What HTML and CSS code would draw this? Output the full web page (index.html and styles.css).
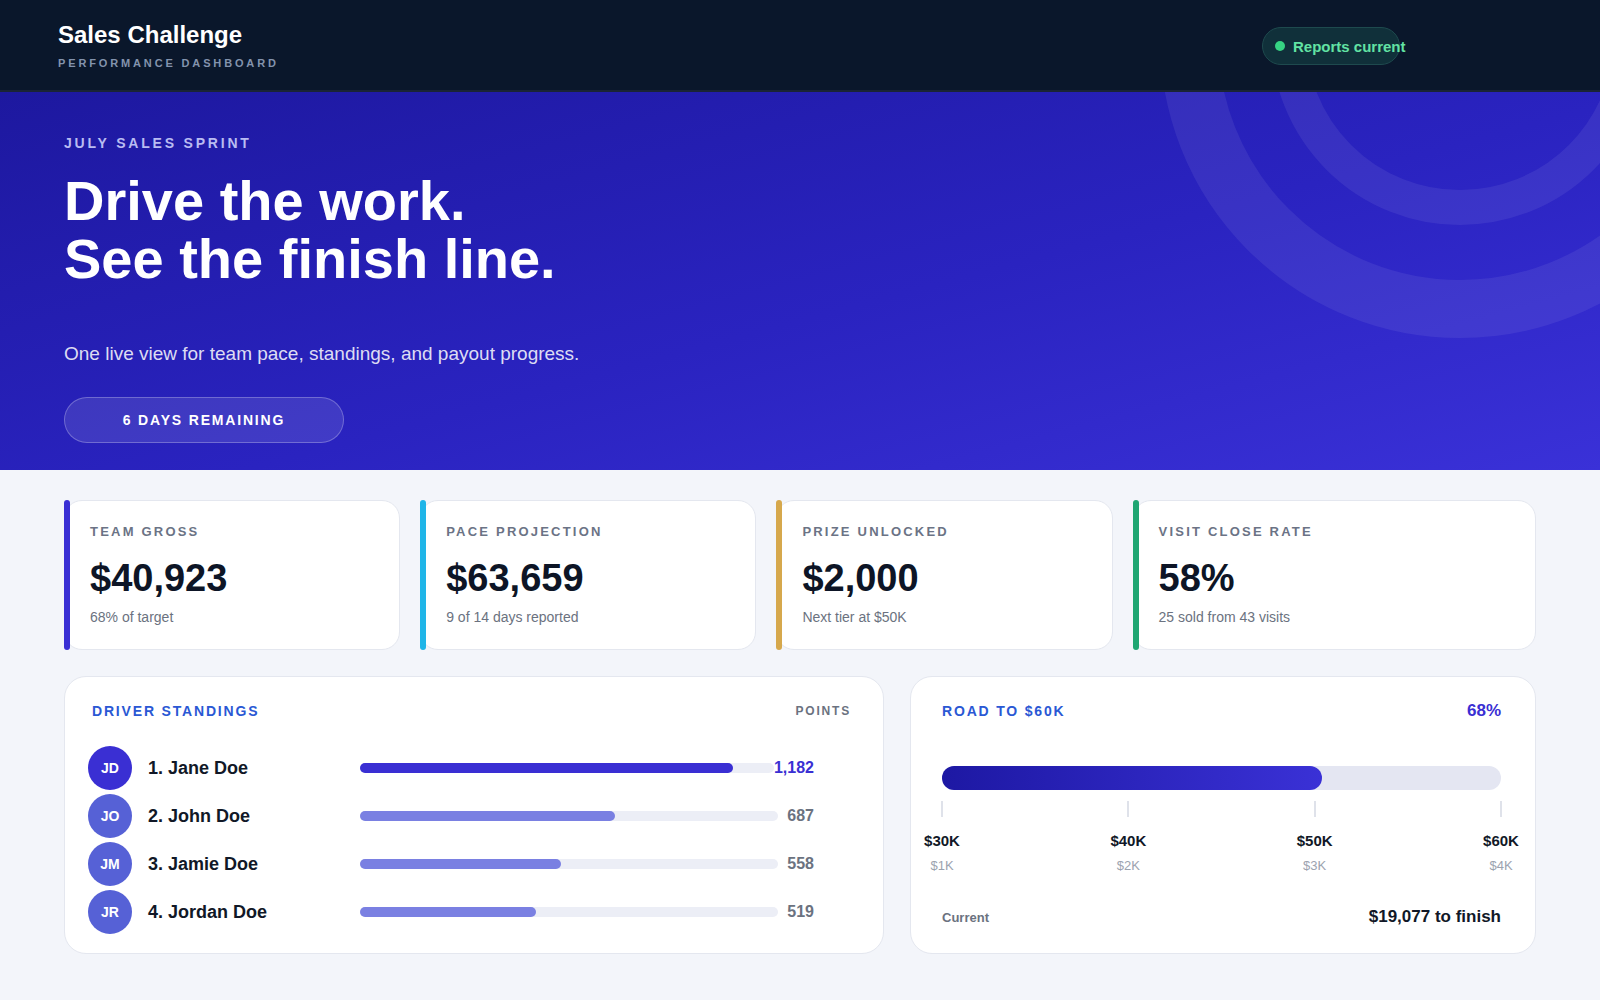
FILE: index.html
```html
<!DOCTYPE html>
<html lang="en">
<head>
<meta charset="utf-8">
<title>Sales Challenge · Performance Dashboard</title>
<link rel="stylesheet" href="styles.css">
</head>
<body>
<header class="topbar">
  <div class="brand">
    <h1 class="brand-title">Sales Challenge</h1>
    <p class="brand-sub">Performance Dashboard</p>
  </div>
  <div class="status"><span class="status-dot"></span>Reports current</div>
</header>

<section class="hero">
  <span class="ring ring-outer"></span>
  <span class="ring ring-inner"></span>
  <p class="eyebrow">July Sales Sprint</p>
  <h2 class="headline">Drive the work.<br>See the finish line.</h2>
  <p class="lede">One live view for team pace, standings, and payout progress.</p>
  <div class="countdown">6 days remaining</div>
</section>

<main class="content">
  <section class="stats">
    <article class="stat stat-indigo">
      <p class="stat-label">Team Gross</p>
      <p class="stat-value">$40,923</p>
      <p class="stat-note">68% of target</p>
    </article>
    <article class="stat stat-sky">
      <p class="stat-label">Pace Projection</p>
      <p class="stat-value">$63,659</p>
      <p class="stat-note">9 of 14 days reported</p>
    </article>
    <article class="stat stat-gold">
      <p class="stat-label">Prize Unlocked</p>
      <p class="stat-value">$2,000</p>
      <p class="stat-note">Next tier at $50K</p>
    </article>
    <article class="stat stat-green">
      <p class="stat-label">Visit Close Rate</p>
      <p class="stat-value">58%</p>
      <p class="stat-note">25 sold from 43 visits</p>
    </article>
  </section>

  <section class="panels">
    <article class="panel standings">
      <div class="panel-head standings-head">
        <h3 class="panel-title">Driver Standings</h3>
        <span class="col-label">Points</span>
      </div>
      <ol class="driver-list">
        <li class="driver driver-lead">
          <span class="avatar">JD</span>
          <span class="driver-name">1. Jane Doe</span>
          <span class="meter"><span class="meter-fill" style="width:90%"></span></span>
          <span class="points">1,182</span>
        </li>
        <li class="driver">
          <span class="avatar">JO</span>
          <span class="driver-name">2. John Doe</span>
          <span class="meter"><span class="meter-fill" style="width:61%"></span></span>
          <span class="points">687</span>
        </li>
        <li class="driver">
          <span class="avatar">JM</span>
          <span class="driver-name">3. Jamie Doe</span>
          <span class="meter"><span class="meter-fill" style="width:48%"></span></span>
          <span class="points">558</span>
        </li>
        <li class="driver">
          <span class="avatar">JR</span>
          <span class="driver-name">4. Jordan Doe</span>
          <span class="meter"><span class="meter-fill" style="width:42%"></span></span>
          <span class="points">519</span>
        </li>
      </ol>
    </article>

    <article class="panel road">
      <div class="panel-head">
        <h3 class="panel-title">Road to $60K</h3>
        <span class="road-pct">68%</span>
      </div>
      <div class="road-track"><span class="road-fill" style="width:68%"></span></div>
      <div class="scale">
        <div class="mark"><span class="tick"></span><span class="mark-goal">$30K</span><span class="mark-prize">$1K</span></div>
        <div class="mark"><span class="tick"></span><span class="mark-goal">$40K</span><span class="mark-prize">$2K</span></div>
        <div class="mark"><span class="tick"></span><span class="mark-goal">$50K</span><span class="mark-prize">$3K</span></div>
        <div class="mark"><span class="tick"></span><span class="mark-goal">$60K</span><span class="mark-prize">$4K</span></div>
      </div>
      <div class="road-foot">
        <span class="road-current">Current</span>
        <span class="road-left">$19,077 to finish</span>
      </div>
    </article>
  </section>
</main>
</body>
</html>
```

FILE: styles.css
```css
* {
  box-sizing: border-box;
}

html,
body {
  margin: 0;
  padding: 0;
}

body {
  background: #f3f5fa;
  font-family: "Liberation Sans", Arial, Helvetica, sans-serif;
  color: #111827;
}

p,
h1,
h2,
h3,
ol {
  margin: 0;
  padding: 0;
}

/* ---------- top bar ---------- */
.topbar {
  height: 92px;
  background: #0a172b;
  border-bottom: 2px solid #1a2436;
  display: flex;
  align-items: flex-start;
  justify-content: space-between;
  padding: 21px 200px 0 58px;
}

.brand-title {
  font-size: 24px;
  line-height: 28px;
  font-weight: 700;
  color: #ffffff;
}

.brand-sub {
  margin-top: 8px;
  font-size: 11px;
  line-height: 13px;
  font-weight: 700;
  letter-spacing: 0.26em;
  text-transform: uppercase;
  color: #8393ad;
}

.status {
  margin-top: 6px;
  width: 138px;
  height: 38px;
  border-radius: 19px;
  background: #10303a;
  border: 1px solid #1e4a4e;
  display: flex;
  align-items: center;
  gap: 8px;
  padding-left: 12px;
  white-space: nowrap;
  font-size: 15px;
  font-weight: 700;
  color: #62e3a4;
}

.status-dot {
  flex: none;
  width: 10px;
  height: 10px;
  border-radius: 50%;
  background: #36d483;
}

/* ---------- hero ---------- */
.hero {
  position: relative;
  overflow: hidden;
  height: 378px;
  padding: 43px 64px 0;
  background: linear-gradient(165deg, #1d189f 0%, #2a23c0 55%, #3a31d8 100%);
  color: #ffffff;
}

.ring {
  position: absolute;
  border-radius: 50%;
  border-style: solid;
  border-color: rgba(255, 255, 255, 0.07);
  pointer-events: none;
}

.ring-outer {
  width: 600px;
  height: 600px;
  right: -160px;
  top: -354px;
  border-width: 58px;
}

.ring-inner {
  width: 378px;
  height: 378px;
  right: -49px;
  top: -245px;
  border-width: 35px;
}

.eyebrow {
  position: relative;
  font-size: 14px;
  line-height: 16px;
  font-weight: 700;
  letter-spacing: 0.2em;
  text-transform: uppercase;
  color: #b9bcf2;
}

.headline {
  position: relative;
  margin-top: 21px;
  font-size: 56px;
  line-height: 58px;
  font-weight: 700;
  color: #ffffff;
}

.lede {
  position: relative;
  margin-top: 52px;
  font-size: 19px;
  line-height: 27px;
  color: rgba(255, 255, 255, 0.86);
}

.countdown {
  position: relative;
  margin-top: 30px;
  width: 280px;
  height: 46px;
  border-radius: 23px;
  background: rgba(255, 255, 255, 0.11);
  border: 1px solid rgba(255, 255, 255, 0.26);
  display: flex;
  align-items: center;
  justify-content: center;
  font-size: 14px;
  font-weight: 700;
  letter-spacing: 0.13em;
  text-transform: uppercase;
  color: #ffffff;
}

/* ---------- content ---------- */
.content {
  padding: 30px 64px 46px;
}

.stats {
  display: grid;
  grid-template-columns: 1fr 1fr 1fr 1.2fr;
  gap: 20px;
}

.stat {
  position: relative;
  background: #ffffff;
  border: 1px solid #e4e7ef;
  border-radius: 18px;
  padding: 23px 26px 24px 25px;
}

.stat::before {
  content: "";
  position: absolute;
  left: -1px;
  top: -1px;
  bottom: -1px;
  width: 6px;
  border-radius: 3px;
  background: var(--accent);
}

.stat-indigo { --accent: #3a2fd4; }
.stat-sky { --accent: #1fb5e8; }
.stat-gold { --accent: #d6a84c; }
.stat-green { --accent: #1fa672; }

.stat-label {
  font-size: 13px;
  line-height: 16px;
  font-weight: 700;
  letter-spacing: 0.17em;
  text-transform: uppercase;
  color: #6b7385;
}

.stat-value {
  margin-top: 19px;
  font-size: 38px;
  line-height: 38px;
  font-weight: 700;
  color: #0d1526;
}

.stat-note {
  margin-top: 12px;
  font-size: 14px;
  line-height: 16px;
  color: #6b7280;
}

.panels {
  margin-top: 26px;
  display: grid;
  grid-template-columns: minmax(0, 1.31fr) minmax(0, 1fr);
  gap: 26px;
}

.panel {
  background: #ffffff;
  border: 1px solid #e4e7ef;
  border-radius: 22px;
}

.panel-head {
  display: flex;
  align-items: center;
  justify-content: space-between;
  height: 16px;
}

.panel-title {
  font-size: 14px;
  line-height: 16px;
  font-weight: 700;
  letter-spacing: 0.13em;
  text-transform: uppercase;
  color: #2a58d4;
}

.col-label {
  font-size: 12px;
  font-weight: 700;
  letter-spacing: 0.15em;
  text-transform: uppercase;
  color: #6b7280;
}

/* standings */
.standings {
  padding: 26px 32px 19px 23px;
}

.standings-head {
  padding-left: 4px;
}

.driver-list {
  list-style: none;
  margin-top: 27px;
  margin-right: 37px;
  display: flex;
  flex-direction: column;
  gap: 4px;
}

.driver {
  display: flex;
  align-items: center;
  height: 44px;
}

.avatar {
  flex: none;
  width: 44px;
  height: 44px;
  border-radius: 50%;
  background: #5661d6;
  color: #ffffff;
  font-size: 14px;
  font-weight: 700;
  display: flex;
  align-items: center;
  justify-content: center;
  margin-right: 16px;
}

.driver-lead .avatar {
  background: #3a2fd3;
}

.driver-name {
  flex: none;
  width: 212px;
  font-size: 18px;
  font-weight: 700;
  color: #111827;
}

.meter {
  flex: 1;
  height: 10px;
  border-radius: 5px;
  background: #eceef6;
  display: flex;
}

.meter-fill {
  height: 100%;
  border-radius: 5px;
  background: #7a80e2;
}

.driver-lead .meter-fill {
  background: #3a2fd3;
}

.points {
  flex: none;
  min-width: 36px;
  text-align: right;
  font-size: 16px;
  font-weight: 700;
  color: #6b7280;
}

.driver-lead .points {
  color: #3a2fd3;
}

/* road to target */
.road {
  padding: 26px 34px 26px 31px;
}

.road-pct {
  font-size: 17px;
  font-weight: 700;
  color: #3a2fd3;
}

.road-track {
  margin-top: 47px;
  height: 24px;
  border-radius: 12px;
  background: #e4e6f2;
  display: flex;
}

.road-fill {
  height: 100%;
  border-radius: 12px;
  background: linear-gradient(90deg, #1d18a3 0%, #3a31d6 100%);
}

.scale {
  margin-top: 11px;
  display: flex;
  justify-content: space-between;
}

.mark {
  width: 0;
  display: flex;
  flex-direction: column;
  align-items: center;
  white-space: nowrap;
}

.tick {
  width: 2px;
  height: 16px;
  background: #dfe2ea;
}

.mark-goal {
  margin-top: 15px;
  font-size: 15px;
  line-height: 18px;
  font-weight: 700;
  color: #111827;
}

.mark-prize {
  margin-top: 8px;
  font-size: 13px;
  line-height: 16px;
  color: #9ca3af;
}

.road-foot {
  margin-top: 33px;
  height: 20px;
  display: flex;
  align-items: center;
  justify-content: space-between;
}

.road-current {
  font-size: 13px;
  font-weight: 700;
  color: #6b7280;
}

.road-left {
  font-size: 17px;
  font-weight: 700;
  color: #111827;
}
```
